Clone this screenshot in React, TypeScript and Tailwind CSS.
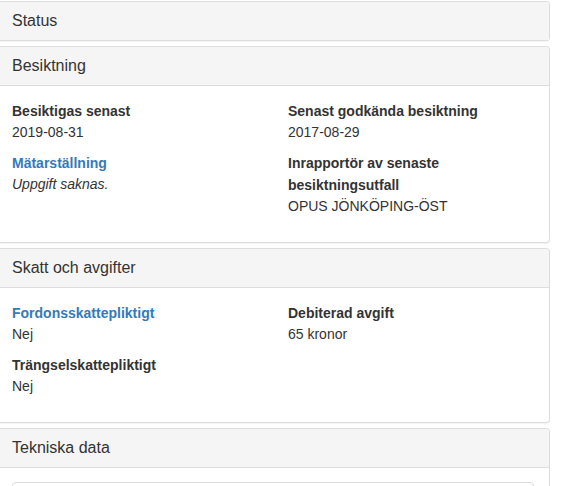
const font = { fontFamily: '"Liberation Sans", Arial, sans-serif' };

function Panel({ title, children }: { title: string; children?: React.ReactNode }) {
  return (
    <div className="rounded-r border-y border-r border-[#dddddd] bg-white shadow-[0_1px_1px_rgba(0,0,0,0.05)]">
      <div className="h-[38px] rounded-tr bg-[#f5f5f5] pl-3 text-[16px] leading-[38px] text-[#333333]">{title}</div>
      {children ? <div className="border-t border-[#dddddd] px-3 pt-[14px] pb-[16px]">{children}</div> : null}
    </div>
  );
}

function Field({ label, value, link, italic }: { label: string; value: string; link?: boolean; italic?: boolean }) {
  return (
    <div className="mb-[10px]">
      <div className={`text-[14px] font-bold leading-[22px] ${link ? "text-[#337ab7]" : "text-[#333333]"}`}>{label}</div>
      <div className={`text-[14px] leading-[20px] text-[#333333] ${italic ? "italic" : ""}`}>{value}</div>
    </div>
  );
}

export default function App() {
  return (
    <div className="min-h-[486px] bg-white pt-px" style={font}>
      <div className="flex w-[550px] flex-col gap-[5px]">
        <Panel title="Status" />
        <Panel title="Besiktning">
          <div className="grid grid-cols-[276px_1fr]">
            <div>
              <Field label="Besiktigas senast" value="2019-08-31" />
              <Field label="Mätarställning" value="Uppgift saknas." link italic />
            </div>
            <div>
              <Field label="Senast godkända besiktning" value="2017-08-29" />
              <div className="mb-[10px] w-[200px]">
                <div className="text-[14px] font-bold leading-[22px] text-[#333333]">Inrapportör av senaste besiktningsutfall</div>
                <div className="text-[14px] leading-[20px] text-[#333333]">OPUS JÖNKÖPING-ÖST</div>
              </div>
            </div>
          </div>
        </Panel>
        <Panel title="Skatt och avgifter">
          <div className="grid grid-cols-[276px_1fr]">
            <div>
              <Field label="Fordonsskattepliktigt" value="Nej" link />
              <Field label="Trängselskattepliktigt" value="Nej" />
            </div>
            <div>
              <Field label="Debiterad avgift" value="65 kronor" />
            </div>
          </div>
        </Panel>
        <Panel title="Tekniska data">
          <div className="mr-[3px] h-[40px] rounded-t border border-[#dddddd]" />
        </Panel>
      </div>
    </div>
  );
}
